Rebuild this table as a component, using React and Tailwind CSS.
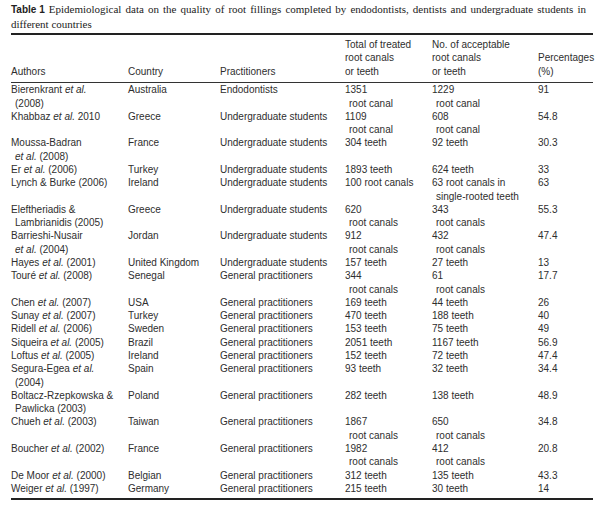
const sans = { fontFamily: '"Liberation Sans", Arial, sans-serif' };

const E = () => <i>et al.</i>;

const UG = "Undergraduate students";
const GP = "General practitioners";

const rows = [
  [[<>Bierenkrant <E /></>, "(2008)"], "Australia", "Endodontists", ["1351", "root canal"], ["1229", "root canal"], "91"],
  [[<>Khabbaz <E /> 2010</>], "Greece", UG, ["1109", "root canal"], ["608", "root canal"], "54.8"],
  [["Moussa-Badran", <><E /> (2008)</>], "France", UG, ["304 teeth"], ["92 teeth"], "30.3"],
  [[<>Er <E /> (2006)</>], "Turkey", UG, ["1893 teeth"], ["624 teeth"], "33"],
  [["Lynch & Burke (2006)"], "Ireland", UG, ["100 root canals"], ["63 root canals in", "single-rooted teeth"], "63"],
  [["Eleftheriadis &", "Lambrianidis (2005)"], "Greece", UG, ["620", "root canals"], ["343", "root canals"], "55.3"],
  [["Barrieshi-Nusair", <><E /> (2004)</>], "Jordan", UG, ["912", "root canals"], ["432", "root canals"], "47.4"],
  [[<>Hayes <E /> (2001)</>], "United Kingdom", UG, ["157 teeth"], ["27 teeth"], "13"],
  [[<>Touré <E /> (2008)</>], "Senegal", GP, ["344", "root canals"], ["61", "root canals"], "17.7"],
  [[<>Chen <E /> (2007)</>], "USA", GP, ["169 teeth"], ["44 teeth"], "26"],
  [[<>Sunay <E /> (2007)</>], "Turkey", GP, ["470 teeth"], ["188 teeth"], "40"],
  [[<>Ridell <E /> (2006)</>], "Sweden", GP, ["153 teeth"], ["75 teeth"], "49"],
  [[<>Siqueira <E /> (2005)</>], "Brazil", GP, ["2051 teeth"], ["1167 teeth"], "56.9"],
  [[<>Loftus <E /> (2005)</>], "Ireland", GP, ["152 teeth"], ["72 teeth"], "47.4"],
  [[<>Segura-Egea <E /></>, "(2004)"], "Spain", GP, ["93 teeth"], ["32 teeth"], "34.4"],
  [["Boltacz-Rzepkowska &", "Pawlicka (2003)"], "Poland", GP, ["282 teeth"], ["138 teeth"], "48.9"],
  [[<>Chueh <E /> (2003)</>], "Taiwan", GP, ["1867", "root canals"], ["650", "root canals"], "34.8"],
  [[<>Boucher <E /> (2002)</>], "France", GP, ["1982", "root canals"], ["412", "root canals"], "20.8"],
  [[<>De Moor <E /> (2000)</>], "Belgian", GP, ["312 teeth"], ["135 teeth"], "43.3"],
  [[<>Weiger <E /> (1997)</>], "Germany", GP, ["215 teeth"], ["30 teeth"], "14"],
];

const cols = "grid grid-cols-[117px_92px_125px_87px_106px_1fr]";

function Lines({ lines }) {
  const list = Array.isArray(lines) ? lines : [lines];
  return (
    <div>
      {list.map((l, i) => (
        <div key={i} className={i > 0 ? "pl-1" : ""}>
          {l}
        </div>
      ))}
    </div>
  );
}

export default function App() {
  return (
    <main className="w-[601px] h-[511px] bg-white px-[11px] pt-[2px] text-[#2e2e2e] overflow-hidden">
      <p
        className="text-[11px] leading-[14px] text-[#222] pr-[4px] text-justify"
        style={{ fontFamily: '"Liberation Serif", "Times New Roman", serif' }}
      >
        <span className="inline-block mr-[4px] font-bold text-[10px] leading-[14px]" style={sans}>
          Table 1
        </span>
        Epidemiological data on the quality of root fillings completed by endodontists, dentists and
        undergraduate students in different countries
      </p>

      <div className="w-[582px] mt-[2px] text-[10px] leading-[13.28px]" style={sans}>
        <div className="border-t-2 border-[#222]" />

        {/* Header */}
        <div className={`${cols} items-end pt-[3px] pb-[4px] border-b border-[#333]`}>
          <div>Authors</div>
          <div>Country</div>
          <div>Practitioners</div>
          <div>
            <div>Total of treated</div>
            <div>root canals</div>
            <div>or teeth</div>
          </div>
          <div>
            <div>No. of acceptable</div>
            <div>root canals</div>
            <div>or teeth</div>
          </div>
          <div>
            <div>Percentages</div>
            <div>(%)</div>
          </div>
        </div>

        {/* Body */}
        <div className="pt-[0.5px] pb-[3px] border-b-2 border-[#222]">
          {rows.map((r, i) => (
            <div key={i} className={cols}>
              <Lines lines={r[0]} />
              <div>{r[1]}</div>
              <div>{r[2]}</div>
              <Lines lines={r[3]} />
              <Lines lines={r[4]} />
              <div>{r[5]}</div>
            </div>
          ))}
        </div>
      </div>
    </main>
  );
}
